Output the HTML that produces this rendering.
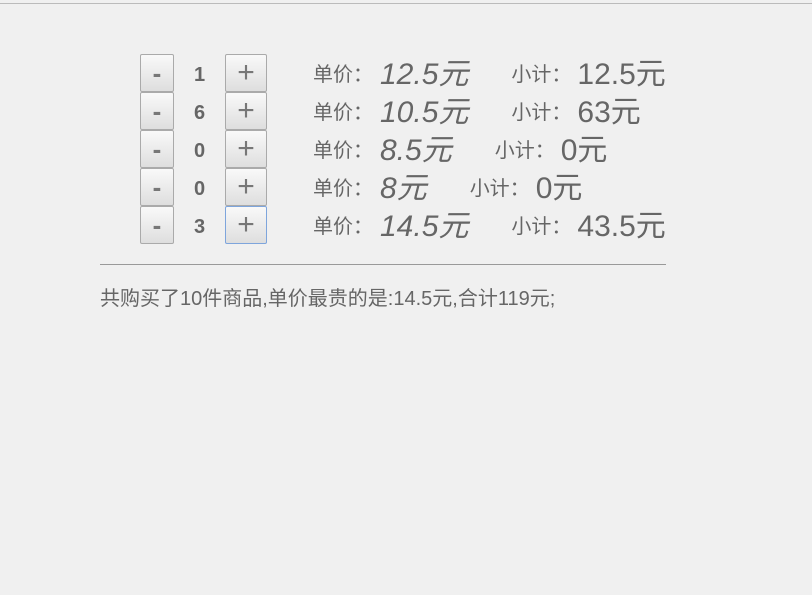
<!DOCTYPE html>
<html><head><meta charset="utf-8"><style>
html,body{margin:0;padding:0;background:#f0f0f0;width:812px;height:595px;overflow:hidden;font-family:"Liberation Sans","Noto Sans CJK SC",sans-serif;color:#666;}
.top{position:absolute;left:0;top:3px;width:812px;height:1px;background:#bbb}
.row{position:absolute;left:140px;height:38px;display:flex;align-items:center;white-space:nowrap}
.btn{box-sizing:border-box;height:38px;border:1px solid #aaa;border-radius:2px;background:linear-gradient(#f9f9f9,#dedede);color:#777;display:flex;align-items:center;justify-content:center;font-size:24px}
.m{width:34px;font-weight:bold;font-size:26px}
.p{width:42px;font-size:30px}
.f{border-color:#7ea5dc}
.n{width:51px;text-align:center;font-weight:bold;font-size:20px;color:#666;position:relative;top:2px}
.l{margin-left:46px;width:67px;font-size:20px;position:relative;top:-1px}
.pr{font-style:italic;font-size:30px;margin-right:43px;position:relative;top:-2px}
.l2{width:66px;font-size:20px;position:relative;top:-1px}
.s{font-size:30px;position:relative;top:-2px}
.hr{position:absolute;left:100px;top:264px;width:566px;height:1px;background:#999}
.sum{position:absolute;left:100px;top:282px;font-size:20px;color:#666}
</style></head><body>
<div class="top"></div>
<div class="row" style="top:54px"><div class="btn m">-</div><div class="n">1</div><div class="btn p">+</div><span class="l">单价：</span><span class="pr">12.5元</span><span class="l2">小计：</span><span class="s">12.5元</span></div>
<div class="row" style="top:92px"><div class="btn m">-</div><div class="n">6</div><div class="btn p">+</div><span class="l">单价：</span><span class="pr">10.5元</span><span class="l2">小计：</span><span class="s">63元</span></div>
<div class="row" style="top:130px"><div class="btn m">-</div><div class="n">0</div><div class="btn p">+</div><span class="l">单价：</span><span class="pr">8.5元</span><span class="l2">小计：</span><span class="s">0元</span></div>
<div class="row" style="top:168px"><div class="btn m">-</div><div class="n">0</div><div class="btn p">+</div><span class="l">单价：</span><span class="pr">8元</span><span class="l2">小计：</span><span class="s">0元</span></div>
<div class="row" style="top:206px"><div class="btn m">-</div><div class="n">3</div><div class="btn p f">+</div><span class="l">单价：</span><span class="pr">14.5元</span><span class="l2">小计：</span><span class="s">43.5元</span></div>
<div class="hr"></div>
<div class="sum">共购买了10件商品,单价最贵的是:14.5元,合计119元;</div>
</body></html>
